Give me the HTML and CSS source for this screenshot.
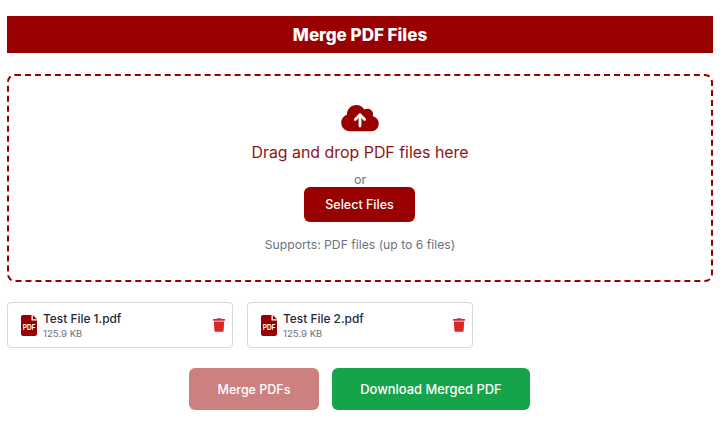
FILE: index.html
```html
<!DOCTYPE html>
<html lang="en">
<head>
    <meta charset="UTF-8">
    <meta name="viewport" content="width=device-width, initial-scale=1.0">
    <title>Merge PDF Files</title>
    <link rel="stylesheet" href="styles.css">
</head>
<body>
    <div class="container">
        <h1 class="page-title">Merge PDF Files</h1>

        <div class="dropzone">
            <svg class="upload-icon" viewBox="0 0 640 512" aria-hidden="true">
                <path d="M144 480C64.5 480 0 415.5 0 336c0-62.8 40.2-116.2 96.2-135.9c-.1-2.7-.2-5.4-.2-8.1c0-88.4 71.6-160 160-160c59.3 0 111 32.2 138.7 80.2C409.9 102 428.3 96 448 96c53 0 96 43 96 96c0 12.2-2.3 23.8-6.4 34.6C596 238.4 640 290.1 640 352c0 70.7-57.3 128-128 128H144zm79-217c-9.4 9.4-9.4 24.6 0 33.9s24.6 9.4 33.9 0l39-39V392c0 13.3 10.7 24 24 24s24-10.7 24-24V257.9l39 39c9.4 9.4 24.6 9.4 33.9 0s9.4-24.6 0-33.9l-80-80c-9.4-9.4-24.6-9.4-33.9 0l-80 80z"/>
            </svg>
            <p class="drop-text">Drag and drop PDF files here</p>
            <p class="drop-or">or</p>
            <button class="btn btn-select">Select Files</button>
            <p class="drop-hint">Supports: PDF files (up to 6 files)</p>
        </div>

        <div class="file-list">
            <div class="file-card">
                <svg class="pdf-icon" viewBox="0 0 16 21" aria-hidden="true">
                    <path d="M2 0h8.5v5.5H16V19a2 2 0 0 1-2 2H2a2 2 0 0 1-2-2V2a2 2 0 0 1 2-2z"/>
                    <path d="M11.8 0 16 4.2H11.8z"/>
                    <text class="pdf-label" transform="translate(1.7 15) scale(0.7 1)">PDF</text>
                </svg>
                <div class="file-info">
                    <div class="file-name">Test File 1.pdf</div>
                    <div class="file-size">125.9 KB</div>
                </div>
                <svg class="trash-icon" viewBox="0 0 448 512" aria-hidden="true">
                    <path d="M432 32H312l-9.4-18.7A24 24 0 0 0 281.1 0H166.8a23.72 23.72 0 0 0-21.4 13.3L136 32H16A16 16 0 0 0 0 48v32a16 16 0 0 0 16 16h416a16 16 0 0 0 16-16V48a16 16 0 0 0-16-16zM53.2 467a48 48 0 0 0 47.9 45h245.8a48 48 0 0 0 47.9-45L416 128H32z"/>
                </svg>
            </div>
            <div class="file-card">
                <svg class="pdf-icon" viewBox="0 0 16 21" aria-hidden="true">
                    <path d="M2 0h8.5v5.5H16V19a2 2 0 0 1-2 2H2a2 2 0 0 1-2-2V2a2 2 0 0 1 2-2z"/>
                    <path d="M11.8 0 16 4.2H11.8z"/>
                    <text class="pdf-label" transform="translate(1.7 15) scale(0.7 1)">PDF</text>
                </svg>
                <div class="file-info">
                    <div class="file-name">Test File 2.pdf</div>
                    <div class="file-size">125.9 KB</div>
                </div>
                <svg class="trash-icon" viewBox="0 0 448 512" aria-hidden="true">
                    <path d="M432 32H312l-9.4-18.7A24 24 0 0 0 281.1 0H166.8a23.72 23.72 0 0 0-21.4 13.3L136 32H16A16 16 0 0 0 0 48v32a16 16 0 0 0 16 16h416a16 16 0 0 0 16-16V48a16 16 0 0 0-16-16zM53.2 467a48 48 0 0 0 47.9 45h245.8a48 48 0 0 0 47.9-45L416 128H32z"/>
                </svg>
            </div>
        </div>

        <div class="actions">
            <button class="btn btn-merge">Merge PDFs</button>
            <button class="btn btn-download">Download Merged PDF</button>
        </div>
    </div>
</body>
</html>
```

FILE: styles.css
```css
* {
    margin: 0;
    padding: 0;
    box-sizing: border-box;
}

body {
    font-family: Inter, "Liberation Sans", sans-serif;
    background: #ffffff;
}

.container {
    padding: 16px 15px 11px 7px;
}

.page-title {
    height: 37px;
    line-height: 38px;
    background: #990000;
    color: #ffffff;
    font-size: 17px;
    font-weight: 800;
    text-align: center;
}

.dropzone {
    height: 208px;
    margin-top: 21px;
    padding-top: 27px;
    border: 2px dashed #990000;
    border-radius: 8px;
    display: flex;
    flex-direction: column;
    align-items: center;
}

.upload-icon {
    width: 38px;
    height: 30px;
    margin-right: 1px;
    fill: #990000;
}

.drop-text {
    margin-top: 8px;
    font-size: 15.9px;
    line-height: 24px;
    color: #8f1414;
}

.drop-or {
    margin-top: 7px;
    font-size: 12.5px;
    line-height: 15px;
    color: #6b7280;
}

.btn {
    border: none;
    border-radius: 6px;
    color: #ffffff;
    font-family: inherit;
    font-weight: 500;
    cursor: pointer;
}

.btn-select {
    width: 111px;
    height: 35px;
    margin-right: 1px;
    background: #990000;
    font-size: 12.5px;
}

.drop-hint {
    margin-top: 14px;
    font-size: 12.2px;
    line-height: 18px;
    color: #6b7280;
}

.file-list {
    display: flex;
    gap: 14px;
    margin-top: 20px;
}

.file-card {
    width: 226px;
    height: 46px;
    padding: 0 7px 0 13px;
    background: #ffffff;
    border: 1px solid #d9d9d9;
    border-radius: 4px;
    display: flex;
    align-items: center;
}

.pdf-icon {
    width: 16px;
    height: 21px;
    fill: #990000;
    flex-shrink: 0;
}

.pdf-label {
    font-family: "Liberation Sans", sans-serif;
    font-size: 9px;
    font-weight: 700;
    fill: #ffffff;
}

.file-info {
    flex: 1;
    margin-left: 6px;
    padding-top: 2px;
}

.file-name {
    font-size: 11.9px;
    font-weight: 500;
    line-height: 16px;
    color: #1f2937;
}

.file-size {
    font-size: 9.6px;
    line-height: 14px;
    color: #6b7280;
}

.trash-icon {
    width: 12px;
    height: 14px;
    fill: #dc2626;
    flex-shrink: 0;
}

.actions {
    display: flex;
    justify-content: center;
    gap: 13px;
    margin-top: 20px;
    padding-right: 1px;
}

.btn-merge {
    width: 130px;
    height: 42px;
    background: #cc8080;
    font-size: 12.5px;
}

.btn-download {
    width: 198px;
    height: 42px;
    background: #16a34a;
    font-size: 12.9px;
}
```
